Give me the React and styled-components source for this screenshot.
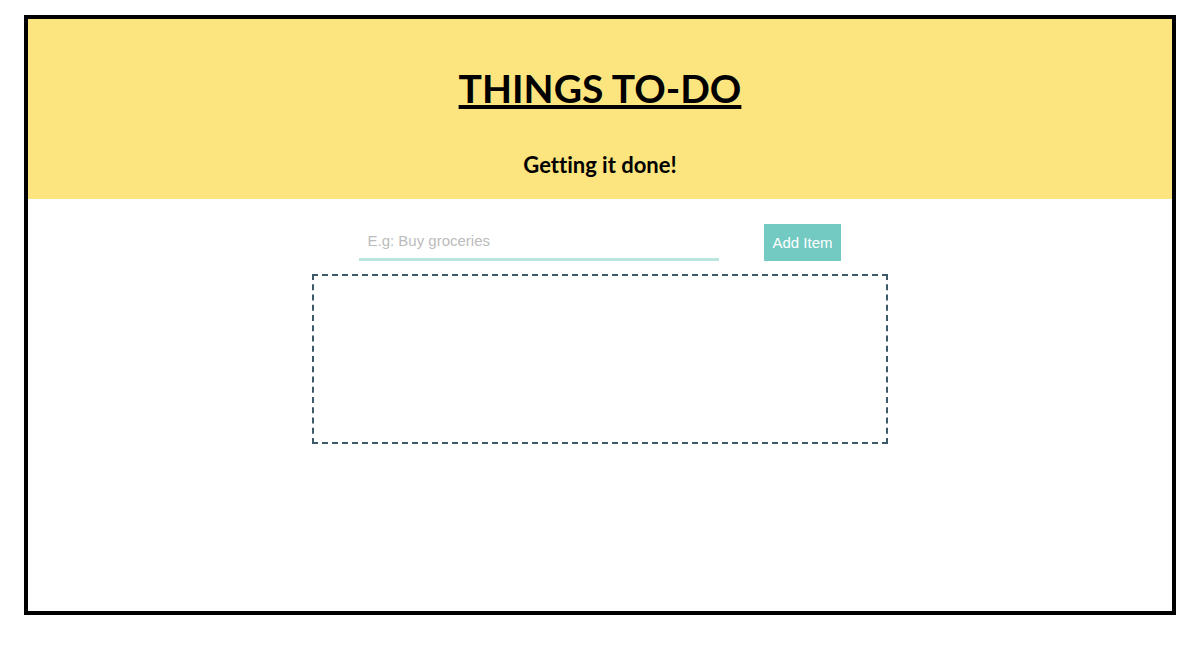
import React, { useState } from "react";
import styled, { createGlobalStyle } from "styled-components";

const GlobalStyle = createGlobalStyle`
  *, *::before, *::after { box-sizing: border-box; }
  body {
    margin: 0;
    background: #fff;
    color: #000;
    font-family: "Liberation Sans", Arial, sans-serif;
  }
`;

const Frame = styled.main`
  margin: 15px 2% 0;
  min-height: 600px;
  border: 4px solid #000;
`;

const Header = styled.header`
  display: flex;
  flex-direction: column;
  align-items: center;
  gap: 37px;
  padding: 45px 16px 18px;
  background: #fce57e;
  font-family: Lato, sans-serif;
  font-variant-ligatures: none;
  text-align: center;
`;

const Title = styled.h1`
  margin: 0;
  font-size: 39px;
  line-height: 48px;
  font-weight: 700;
  text-decoration: underline;
  text-decoration-thickness: 4px;
  text-decoration-skip-ink: none;
`;

const Subtitle = styled.h2`
  margin: 0;
  font-size: 22px;
  line-height: 32px;
  font-weight: 700;
`;

const Form = styled.form`
  display: flex;
  justify-content: center;
  gap: 45px;
  padding: 25px 16px 13px;
`;

const TextInput = styled.input`
  width: 360px;
  height: 37px;
  padding: 0 8px 2px;
  border: 0;
  border-bottom: 3px solid #b9e6e0;
  outline: 0;
  background: transparent;
  font: inherit;
  font-size: 15px;

  &::placeholder {
    color: #bcbcbc;
    opacity: 1;
  }
`;

const AddButton = styled.button`
  height: 37px;
  padding: 0 8px;
  border: 0;
  background: #73cac2;
  color: #fff;
  font: inherit;
  font-size: 15px;
  cursor: pointer;
`;

const List = styled.ul`
  width: 576px;
  max-width: 100%;
  min-height: 170px;
  margin: 0 auto;
  padding: 16px 32px;
  border: 2px dashed #3c5a68;
  line-height: 24px;
`;

export default function App() {
  const [items, setItems] = useState([]);
  const [text, setText] = useState("");

  const addItem = (event) => {
    event.preventDefault();
    if (!text.trim()) return;
    setItems([...items, text.trim()]);
    setText("");
  };

  return (
    <>
      <GlobalStyle />
      <Frame>
        <Header>
          <Title>THINGS TO-DO</Title>
          <Subtitle>Getting it done!</Subtitle>
        </Header>
        <Form onSubmit={addItem}>
          <TextInput
            type="text"
            aria-label="New item"
            placeholder="E.g: Buy groceries"
            value={text}
            onChange={(event) => setText(event.target.value)}
          />
          <AddButton type="submit">Add Item</AddButton>
        </Form>
        <List>
          {items.map((item, index) => (
            <li key={index}>{item}</li>
          ))}
        </List>
      </Frame>
    </>
  );
}
